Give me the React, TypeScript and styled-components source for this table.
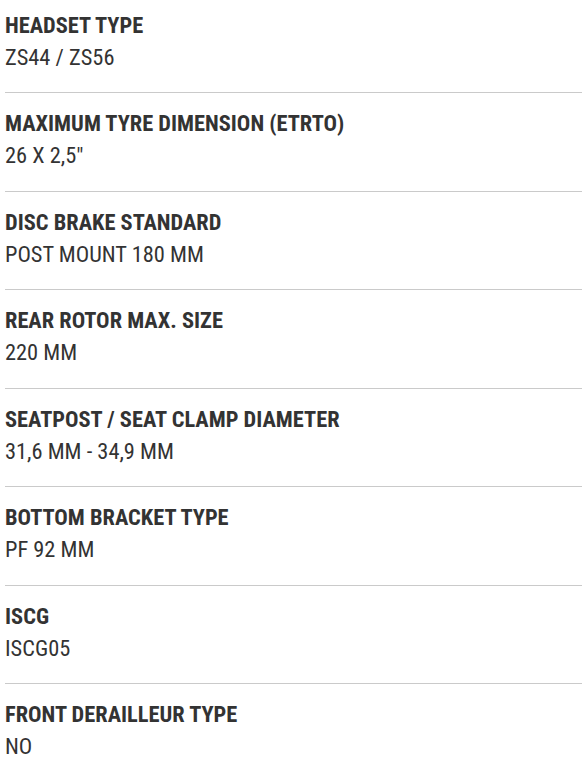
import React from "react";
import styled, { createGlobalStyle } from "styled-components";

const Global = createGlobalStyle`
  html, body { margin: 0; padding: 0; background: #fff; }
  body { font-family: "Roboto Condensed", Roboto, "Liberation Sans", sans-serif; font-stretch: condensed; color: #333; }
`;

const List = styled.dl`
  margin: 0;
  padding: 0 0 0 5px;
  width: 577px;
`;

const Item = styled.div`
  padding: 14px 0 18.1px 0;
  border-bottom: 1px solid #cacaca;
  &:first-child { padding-top: 8.5px; }
  &:last-child { border-bottom: none; }
`;

const Term = styled.dt`
  font-size: 22.4px;
  line-height: 32.4px;
  font-weight: 700;
  text-transform: uppercase;
`;

const Value = styled.dd`
  margin: 0;
  font-size: 22.4px;
  line-height: 33px;
  font-weight: 400;
`;

const specs: [string, string][] = [
  ["HEADSET TYPE", "ZS44 / ZS56"],
  ["MAXIMUM TYRE DIMENSION (ETRTO)", "26 X 2,5\""],
  ["DISC BRAKE STANDARD", "POST MOUNT 180 MM"],
  ["REAR ROTOR MAX. SIZE", "220 MM"],
  ["SEATPOST / SEAT CLAMP DIAMETER", "31,6 MM - 34,9 MM"],
  ["BOTTOM BRACKET TYPE", "PF 92 MM"],
  ["ISCG", "ISCG05"],
  ["FRONT DERAILLEUR TYPE", "NO"],
];

export default function App() {
  return (
    <>
      <Global />
      <List>
        {specs.map(([t, v]) => (
          <Item key={t}>
            <Term>{t}</Term>
            <Value>{v}</Value>
          </Item>
        ))}
      </List>
    </>
  );
}
